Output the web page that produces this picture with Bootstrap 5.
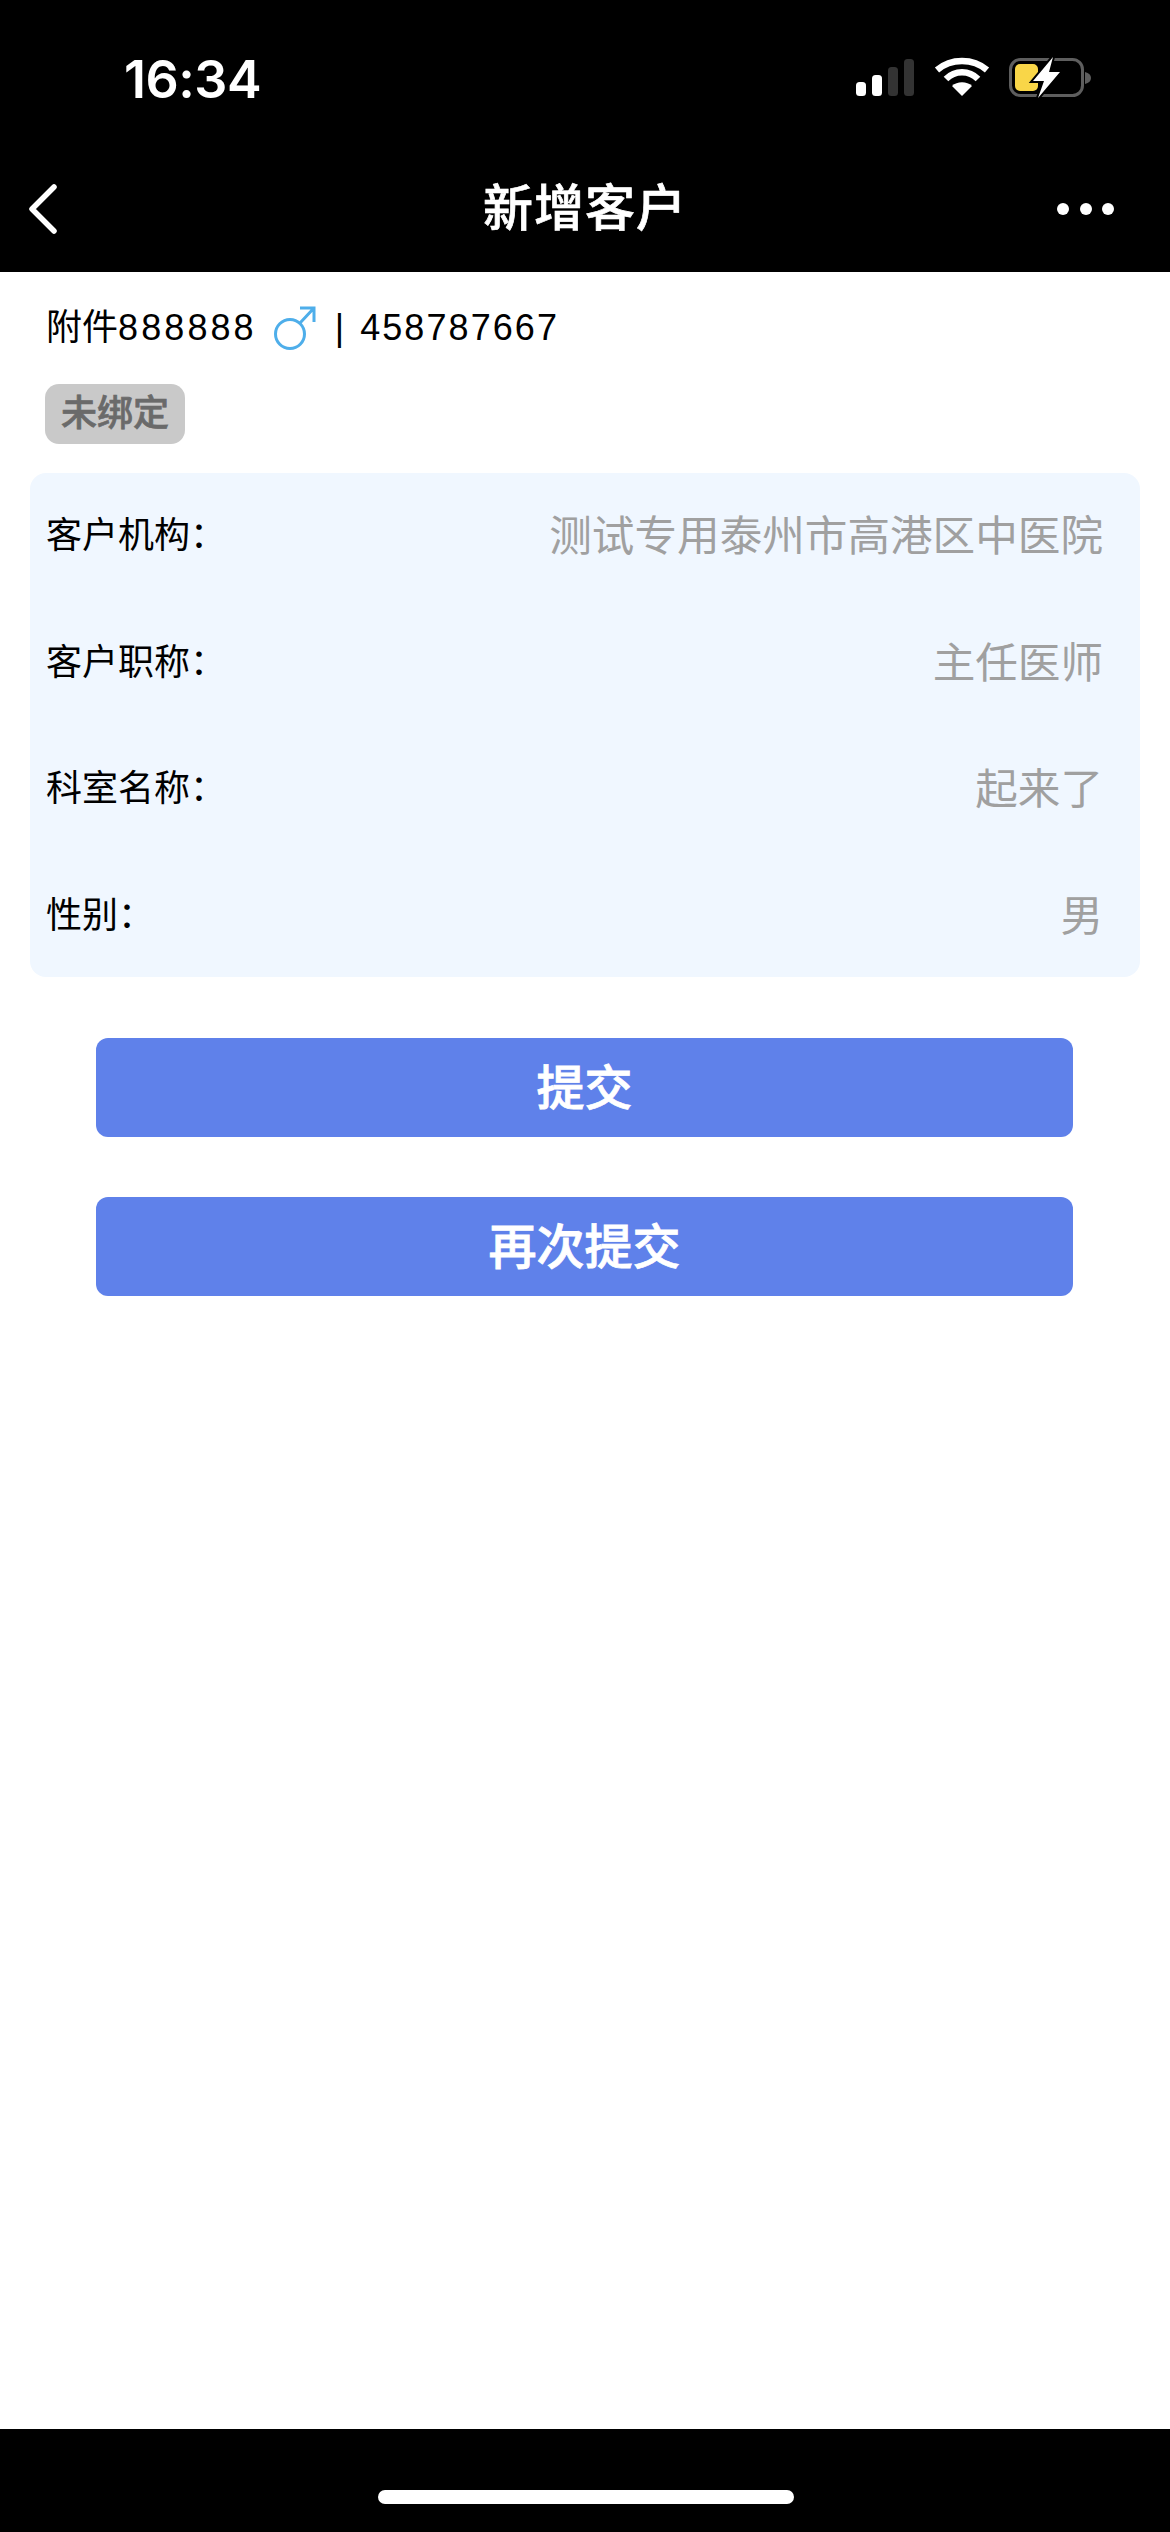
<!doctype html>
<html lang="zh-CN"><head><meta charset="utf-8">
<title>新增客户</title>
<link rel="stylesheet" href="https://cdn.jsdelivr.net/npm/bootstrap@5.3.0/dist/css/bootstrap.min.css">
<style>
html,body{height:2532px;margin:0}
body{font-family:"Liberation Sans","Noto Sans CJK SC",sans-serif;background:#fff;color:#000}
.shell{height:2532px}
.statusrow{height:140px;padding:56px 78px 0 124px}
.statusicons{margin-top:1px}
.clock{font-family:Inter,"Liberation Sans",sans-serif;font-size:52px;font-weight:600;line-height:48px;letter-spacing:-.5px}
.titlerow{height:132px;padding-top:6px}
.sideslot{flex:1 1 0}
.backmark{margin-left:28px}
.moremark{margin-right:55px}
.pagetitle{font-size:50px;font-weight:500;-webkit-text-stroke:.7px #fff;line-height:60px;color:#fff;letter-spacing:1px}
.person{padding-left:46px;height:112px;font-size:36px;line-height:52px;letter-spacing:2.07px}
.person .cn{letter-spacing:0}
.person .eights{letter-spacing:3.1px}
.sep{margin:0 14px 0 18px}
.tagwrap{padding-left:45px;height:89px}
.tagchip{display:inline-block;background:#c9c9c9;color:#6a6a6a;font-size:36px;font-weight:500;-webkit-text-stroke:.7px #6a6a6a;line-height:60px;height:60px;padding:0 16px;border-radius:14px}
.infobox{margin:0 30px;height:504px;background:#f0f7ff;border-radius:16px;padding:0 37px 0 16px}
.inforow{height:126.5px}
.inforow .lbl{font-size:36px}
.inforow .val{font-size:42.6px;color:#a0a0a0;padding-top:2px}
.actions{padding:61px 97px 0 96px}
.actionbtn{display:block;width:100%;height:99px;background:#5f81ea;border:0;border-radius:12px;color:#fff;font-size:48px;font-weight:500;-webkit-text-stroke:.8px #fff;line-height:97px;padding:2px 0 0}
.actionbtn:hover{background:#5f81ea;color:#fff}
.actionbtn+.actionbtn{margin-top:60px}
.homezone{height:103px;padding-top:61px}
.homebar{width:416px;height:14px;border-radius:7px;background:#fff;margin-left:378px}
</style></head>
<body>
<div class="shell d-flex flex-column">
  <header class="bg-black text-white">
    <div class="statusrow d-flex justify-content-between align-items-start">
      <div class="clock">16:34</div>
      <svg class="statusicons" width="236" height="42" viewBox="0 0 236 42" aria-hidden="true">
        <rect x="0" y="25" width="10" height="14" rx="3.5" fill="#fff"/>
        <rect x="16" y="18" width="10" height="21" rx="3.5" fill="#fff"/>
        <rect x="32" y="10" width="10" height="29" rx="3.5" fill="#333"/>
        <rect x="48" y="2" width="10" height="37" rx="3.5" fill="#333"/>
        <path d="M81 13C95 1 117 1 131 13" fill="none" stroke="#fff" stroke-width="6.5"/>
        <path d="M90 22C99 13 113 13 122 22" fill="none" stroke="#fff" stroke-width="6.5"/>
        <path d="M96 29C101 24 111 24 116 29L106 39Z" fill="#fff"/>
        <rect x="154.500" y="2.500" width="72" height="36" rx="10" fill="none" stroke="#5e5e5e" stroke-width="3"/>
        <path d="M229 15c4 1 6 3 6 6s-2 5-6 6z" fill="#5e5e5e"/>
        <rect x="159" y="7" width="23" height="27" rx="5" fill="#f9d648"/>
        <path d="M197 0L177 24H188L182 41L204 15H193Z" fill="#fff" stroke="#000" stroke-width="4" paint-order="stroke"/>
      </svg>
    </div>
    <div class="titlerow d-flex align-items-center">
      <div class="sideslot d-flex"><svg class="backmark" width="30" height="50" viewBox="0 0 30 50" aria-hidden="true"><path d="M26 3L4 25L26 47" fill="none" stroke="#fff" stroke-width="5.500" stroke-linecap="round" stroke-linejoin="round"/></svg></div>
      <div class="pagetitle">新增客户</div>
      <div class="sideslot d-flex justify-content-end"><svg class="moremark" width="58" height="14" viewBox="0 0 58 14" aria-hidden="true"><circle cx="6" cy="7" r="6" fill="#fff"/><circle cx="29" cy="7" r="6" fill="#fff"/><circle cx="51" cy="7" r="6" fill="#fff"/></svg></div>
    </div>
  </header>
  <main class="flex-grow-1">
    <div class="person d-flex align-items-center">
      <span class="cn">附件</span><span class="eights">888888</span>
      <svg class="ms-3" width="44" height="48" viewBox="0 0 44 48" aria-hidden="true"><circle cx="17" cy="30" r="14.500" fill="none" stroke="#4eaeea" stroke-width="3"/><path d="M27 19L41 4M27 4H41V18" fill="none" stroke="#4eaeea" stroke-width="3"/></svg>
      <span class="sep">|</span><span>458787667</span>
    </div>
    <div class="tagwrap"><span class="tagchip">未绑定</span></div>
    <div class="infobox">
      <div class="inforow d-flex justify-content-between align-items-center"><span class="lbl">客户机构：</span><span class="val">测试专用泰州市高港区中医院</span></div>
      <div class="inforow d-flex justify-content-between align-items-center"><span class="lbl">客户职称：</span><span class="val">主任医师</span></div>
      <div class="inforow d-flex justify-content-between align-items-center"><span class="lbl">科室名称：</span><span class="val">起来了</span></div>
      <div class="inforow d-flex justify-content-between align-items-center"><span class="lbl">性别：</span><span class="val">男</span></div>
    </div>
    <div class="actions">
      <button type="button" class="btn actionbtn">提交</button>
      <button type="button" class="btn actionbtn">再次提交</button>
    </div>
  </main>
  <footer class="bg-black homezone"><div class="homebar"></div></footer>
</div>
<script src="https://cdn.jsdelivr.net/npm/bootstrap@5.3.0/dist/js/bootstrap.bundle.min.js"></script>
</body></html>
